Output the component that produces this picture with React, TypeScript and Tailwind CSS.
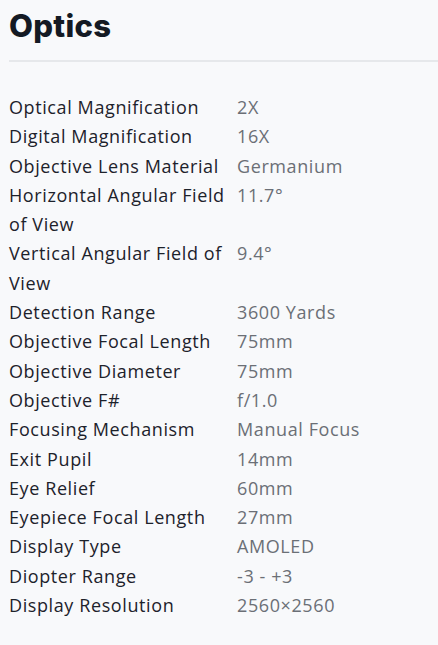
const specs: [string, string][] = [
  ["Optical Magnification", "2X"],
  ["Digital Magnification", "16X"],
  ["Objective Lens Material", "Germanium"],
  ["Horizontal Angular Field of View", "11.7°"],
  ["Vertical Angular Field of View", "9.4°"],
  ["Detection Range", "3600 Yards"],
  ["Objective Focal Length", "75mm"],
  ["Objective Diameter", "75mm"],
  ["Objective F#", "f/1.0"],
  ["Focusing Mechanism", "Manual Focus"],
  ["Exit Pupil", "14mm"],
  ["Eye Relief", "60mm"],
  ["Eyepiece Focal Length", "27mm"],
  ["Display Type", "AMOLED"],
  ["Diopter Range", "-3 - +3"],
  ["Display Resolution", "2560×2560"],
];

export default function App() {
  return (
    <div className="min-h-screen w-full bg-[#f8f9fb] pl-[9px] pt-[6px] font-['Open_Sans',sans-serif]">
      <h2 className="text-[31px] leading-[40px] font-extrabold tracking-[0.3px] text-[#141a24] font-['Inter',sans-serif]">
        Optics
      </h2>
      <div className="mt-[14px] h-[2px] bg-[#e6e8eb]" />
      <div className="mt-[31px] grid grid-cols-[228px_1fr] text-[18px] leading-[29.3px] tracking-[0.6px]">
        {specs.map(([label, value]) => (
          <div key={label} className="contents">
            <div className="text-[#1d222b] pr-[4px]">{label}</div>
            <div className="text-[#6b6f76]">{value}</div>
          </div>
        ))}
      </div>
    </div>
  );
}
